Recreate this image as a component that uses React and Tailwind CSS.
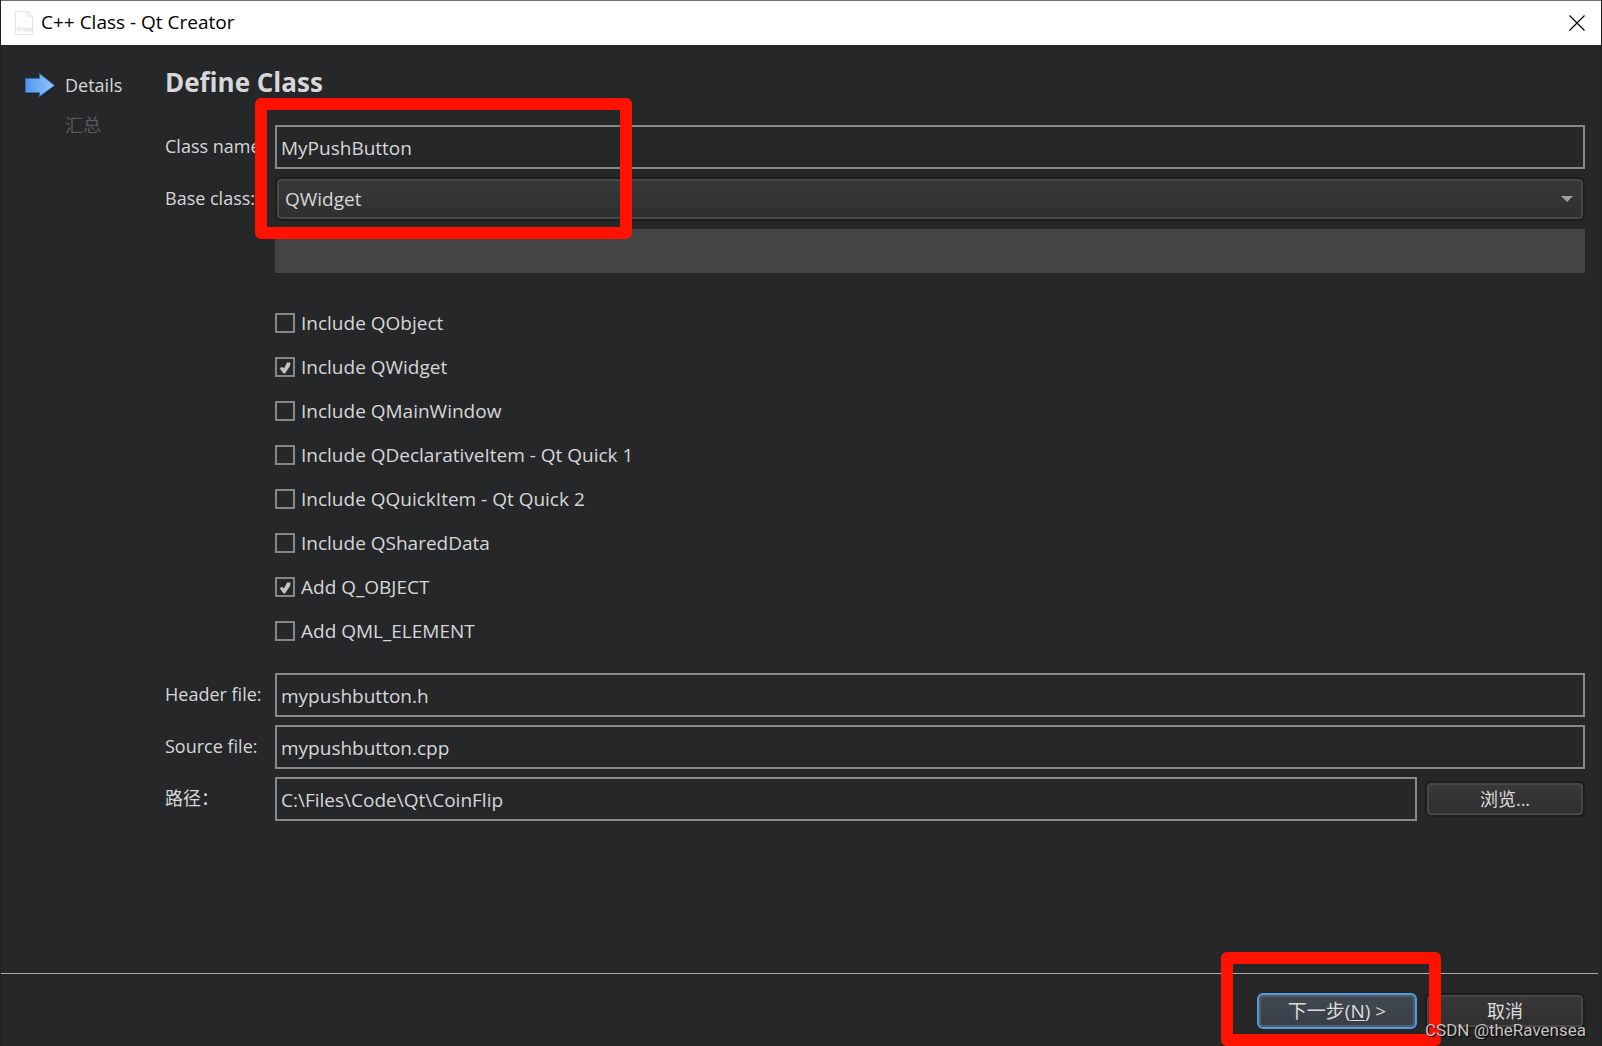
import { useState } from "react";

const FIELD =
    "h-11 w-full min-w-0 border-2 border-[#868889] bg-[#262729] px-1 pt-0.5 text-[19px] text-[#d6d7d8] outline-none";

const ROW_LABEL = "w-[110px] shrink-0 pb-0.5 text-[18px] leading-6";

const BUTTON =
    "h-9 w-40 rounded-md border-2 border-[#1d1d1e] bg-linear-to-b from-[#393939] to-[#2f2f2f] text-[18px] leading-none text-[#dcdcdc] inset-ring-2 inset-ring-[#474747]";

const OPTIONS = [
    { id: "qobject", label: "Include QObject", checked: false },
    { id: "qwidget", label: "Include QWidget", checked: true },
    { id: "qmainwindow", label: "Include QMainWindow", checked: false },
    { id: "qdeclarative", label: "Include QDeclarativeItem - Qt Quick 1", checked: false },
    { id: "qquickitem", label: "Include QQuickItem - Qt Quick 2", checked: false },
    { id: "qshareddata", label: "Include QSharedData", checked: false },
    { id: "q-object-macro", label: "Add Q_OBJECT", checked: true },
    { id: "qml-element", label: "Add QML_ELEMENT", checked: false },
];

function FileIcon() {
    return (
        <svg width="18" height="24" viewBox="0 0 18 24" aria-hidden>
            <path d="M.5.5H13L17.5 5V23.5H.5Z" fill="#fdfdfd" stroke="#e4e4e4" />
            <path d="M13 .5V5H17.5" fill="none" stroke="#e4e4e4" />
            <text x="2" y="20" fontSize="6" fill="#d0d0d0">h/cpp</text>
        </svg>
    );
}

function ArrowIcon() {
    return (
        <svg width="32" height="28" viewBox="0 0 32 28" aria-hidden>
            <defs>
                <linearGradient id="arrow-fill" x1="0" y1="0" x2="1" y2="0">
                    <stop offset="0%" stopColor="#4c97ee" />
                    <stop offset="100%" stopColor="#9cc6f8" />
                </linearGradient>
            </defs>
            <path d="M1 9H14V4L31 15.5 15 27V23H1Z" fill="#17181b" opacity="0.6" />
            <path d="M.5 7.5H14.5V2.5L29.5 14.5 14.5 25.5V21.5H.5Z" fill="url(#arrow-fill)" stroke="#2f6cba" />
        </svg>
    );
}

function CheckOption({ id, label, checked }) {
    const [on, setOn] = useState(checked);

    return (
        <div className="flex h-11 items-center gap-[6px]">
            <span className="relative h-5 w-5">
                <input
                    id={id}
                    type="checkbox"
                    checked={on}
                    onChange={(e) => setOn(e.target.checked)}
                    className="peer block h-5 w-5 appearance-none border-2 border-[#868686] bg-[#262729]"
                />
                <svg
                    viewBox="0 0 20 20"
                    className="pointer-events-none absolute inset-0 hidden h-5 w-5 peer-checked:block"
                    aria-hidden
                >
                    <path d="M4.5 11L7.5 10 9 11.5 12 5.5H15.5L15 9 10 16.5H8.5Z" fill="#c4c4c4" />
                </svg>
            </span>
            <label htmlFor={id} className="text-[19px] leading-6">{label}</label>
        </div>
    );
}

function TextRow({ id, label, value, children }) {
    return (
        <div className="flex items-center">
            <label htmlFor={id} className={ROW_LABEL}>{label}</label>
            <div className="flex min-w-0 flex-1 items-center gap-2">
                <input id={id} type="text" defaultValue={value} className={FIELD} />
                {children}
            </div>
        </div>
    );
}

function TitleBar() {
    return (
        <header className="flex h-[45px] items-center border-t border-[#707070] bg-white pl-[14px] pr-4 text-black">
            <FileIcon />
            <h1 className="ml-2 flex-1 pb-0.5 text-[19px] leading-6">C++ Class - Qt Creator</h1>
            <button type="button" aria-label="Close">
                <svg width="16" height="16" viewBox="0 0 16 16" aria-hidden>
                    <path d="M.5.5L15.5 15.5M15.5.5L.5 15.5" stroke="#000" strokeWidth="1.2" />
                </svg>
            </button>
        </header>
    );
}

function Steps() {
    return (
        <nav className="w-[164px] shrink-0 pt-5 text-[18px] leading-10">
            <ol>
                <li className="flex items-center gap-2 pl-6" aria-current="step">
                    <ArrowIcon />
                    Details
                </li>
                <li className="pl-16 text-[#58595b]">汇总</li>
            </ol>
        </nav>
    );
}

export default function App() {
    return (
        <div className="flex min-h-screen flex-col border-x border-[#202122] bg-[#262729] font-['Open_Sans','Noto_Sans_CJK_SC',sans-serif] text-[#d6d7d8]">
            <TitleBar />

            <div className="flex flex-1">
                <Steps />

                <main className="min-w-0 flex-1 pr-4">
                    <h2 className="pt-[19px] pb-px text-[26px] leading-9 font-bold">Define Class</h2>

                    <form className="relative pt-6">
                        <div className="flex flex-col gap-2">
                            <TextRow id="class-name" label="Class name:" value="MyPushButton" />

                            <div className="flex items-center">
                                <label htmlFor="base-class" className={ROW_LABEL}>Base class:</label>
                                <div className="relative flex-1">
                                    <select
                                        id="base-class"
                                        defaultValue="QWidget"
                                        className="block h-11 w-full appearance-none rounded-md border-2 border-[#1d1d1e] bg-linear-to-b from-[#393939] to-[#2f2f2f] px-2 text-[19px] inset-ring-2 inset-ring-[#474747]"
                                    >
                                        <option>QObject</option>
                                        <option>QWidget</option>
                                        <option>QMainWindow</option>
                                    </select>
                                    <svg
                                        width="12"
                                        height="6"
                                        viewBox="0 0 12 6"
                                        className="pointer-events-none absolute top-[19px] right-3"
                                        aria-hidden
                                    >
                                        <path d="M0 0H12L6 6Z" fill="#a0a0a0" />
                                    </svg>
                                </div>
                            </div>

                            <input
                                type="text"
                                disabled
                                aria-label="Custom base class"
                                className="ml-[110px] h-11 bg-[#444444] px-2"
                            />
                        </div>

                        <div className="mt-7 mb-5 ml-[110px]">
                            {OPTIONS.map((option) => (
                                <CheckOption key={option.id} {...option} />
                            ))}
                        </div>

                        <div className="flex flex-col gap-2">
                            <TextRow id="header-file" label="Header file:" value="mypushbutton.h" />
                            <TextRow id="source-file" label="Source file:" value="mypushbutton.cpp" />
                            <TextRow id="path" label="路径：" value="C:\Files\Code\Qt\CoinFlip">
                                <button type="button" className={`${BUTTON} shrink-0`}>浏览...</button>
                            </TextRow>
                        </div>

                        {/* highlight around the class name and base class */}
                        <div className="pointer-events-none absolute -top-[3px] left-[90px] h-[141px] w-[377px] rounded-md border-12 border-[#ff1200]" />
                    </form>
                </main>
            </div>

            <footer className="relative mr-[3px] flex h-[73px] justify-end gap-2 border-t border-[#a9abab] bg-[#262626] pt-[19px] pr-[13px]">
                <button
                    type="button"
                    className="h-9 w-40 rounded-md border-2 border-[#4d9bea] bg-linear-to-b from-[#434950] to-[#383e45] text-[19px] leading-none text-[#dcdcdc] inset-ring-2 inset-ring-[#555b62]"
                >
                    下一步(<u className="underline-offset-2">N</u>) &gt;
                </button>
                <button type="button" className={BUTTON}>取消</button>

                {/* highlight around the next button */}
                <div className="pointer-events-none absolute -top-[22px] right-[157px] h-[94px] w-[220px] rounded-md border-12 border-[#ff1200]" />
                <span className="absolute right-3 bottom-1 font-['Roboto',sans-serif] text-[17px] leading-6 text-[#c4c4c4] text-shadow-[1px_1px_1px_#000]">
                    CSDN @theRavensea
                </span>
            </footer>
        </div>
    );
}
